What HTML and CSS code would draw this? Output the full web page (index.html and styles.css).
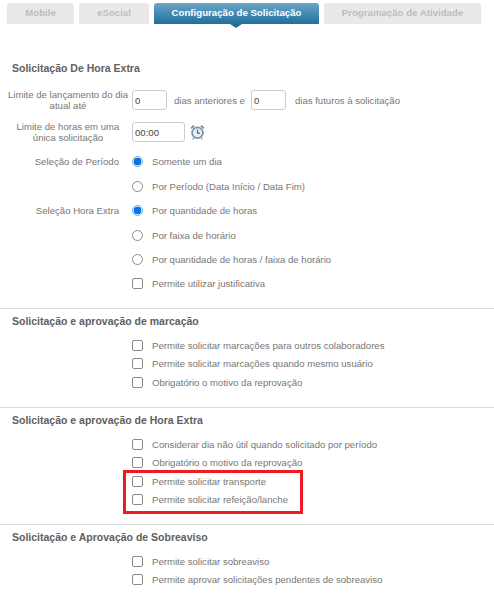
FILE: index.html
```html
<!DOCTYPE html>
<html lang="pt-BR">
<head>
    <meta charset="UTF-8">
    <meta name="viewport" content="width=device-width, initial-scale=1.0">
    <title>Configuração de Solicitação</title>
    <link rel="stylesheet" href="styles.css">
</head>
<body>
    <!-- Abas -->
    <nav class="tabs">
        <div class="tab tab-mobile">Mobile</div>
        <div class="tab tab-esocial">eSocial</div>
        <div class="tab tab-config active">Configuração de Solicitação</div>
        <div class="tab tab-prog">Programação de Atividade</div>
    </nav>

    <!-- Hora extra -->
    <section class="section first">
        <h2>Solicitação De Hora Extra</h2>

        <div class="form-row row-limit">
            <div class="row-label">Limite de lançamento do dia atual até</div>
            <div class="row-inline">
                <input class="text-input small" type="text" value="0">
                <span class="after-first">dias anteriores e</span>
                <input class="text-input small" type="text" value="0">
                <span class="after-second">dias futuros à solicitação</span>
            </div>
        </div>

        <div class="form-row row-hours">
            <div class="row-label">Limite de horas em uma única solicitação</div>
            <div class="row-inline">
                <input class="text-input hour" type="text" value="00:00">
                <svg class="clock" width="15" height="16" viewBox="0 0 15 16">
                    <circle cx="7.5" cy="8.8" r="5.4" fill="#e9eff3" stroke="#7b93a3" stroke-width="1.7"/>
                    <path d="M7.5 5.6V9.2H10" fill="none" stroke="#4f6676" stroke-width="1.2"/>
                    <path d="M.6 3.8 3.2 1 4.6 2.2 1.8 5ZM14.4 3.8 11.8 1 10.4 2.2 13.2 5Z" fill="#6f8797"/>
                    <path d="M3.6 14.2 2.6 15.4M11.4 14.2 12.4 15.4" stroke="#7b93a3" stroke-width="1.4"/>
                </svg>
            </div>
        </div>

        <div class="form-row row-first-radio">
            <div class="row-label side">Seleção de Período</div>
            <label class="option"><span class="radio on"></span>Somente um dia</label>
        </div>
        <div class="form-row row-period">
            <div class="row-label"></div>
            <label class="option"><span class="radio"></span>Por Período (Data Início / Data Fim)</label>
        </div>

        <div class="form-row row-extra">
            <div class="row-label side">Seleção Hora Extra</div>
            <label class="option"><span class="radio on"></span>Por quantidade de horas</label>
        </div>
        <div class="form-row row-next">
            <div class="row-label"></div>
            <label class="option"><span class="radio"></span>Por faixa de horário</label>
        </div>
        <div class="form-row row-last">
            <div class="row-label"></div>
            <label class="option"><span class="radio"></span>Por quantidade de horas / faixa de horário</label>
        </div>
        <div class="form-row row-last">
            <div class="row-label"></div>
            <label class="option"><span class="check"></span>Permite utilizar justificativa</label>
        </div>
    </section>

    <section class="section short">
        <h2>Solicitação e aprovação de marcação</h2>
        <div class="check-list">
            <label class="option"><span class="check"></span>Permite solicitar marcações para outros colaboradores</label>
            <label class="option"><span class="check"></span>Permite solicitar marcações quando mesmo usuário</label>
            <label class="option"><span class="check"></span>Obrigatório o motivo da reprovação</label>
        </div>
    </section>

    <section class="section">
        <h2>Solicitação e aprovação de Hora Extra</h2>
        <div class="check-list">
            <label class="option"><span class="check"></span>Considerar dia não útil quando solicitado por período</label>
            <label class="option"><span class="check"></span>Obrigatório o motivo da reprovação</label>
            <label class="option"><span class="check"></span>Permite solicitar transporte</label>
            <label class="option"><span class="check"></span>Permite solicitar refeição/lanche</label>
        </div>
        <!-- destaque em vermelho -->
        <div class="highlight"></div>
    </section>

    <section class="section last">
        <h2>Solicitação e Aprovação de Sobreaviso</h2>
        <div class="check-list">
            <label class="option"><span class="check"></span>Permite solicitar sobreaviso</label>
            <label class="option"><span class="check"></span>Permite aprovar solicitações pendentes de sobreaviso</label>
        </div>
    </section>
</body>
</html>
```

FILE: styles.css
```css
* {
    box-sizing: border-box;
    margin: 0;
    padding: 0;
}

html, body {
    height: 594px;
    overflow: hidden;
}

body {
    font-family: "Liberation Sans", Arial, sans-serif;
    font-size: 9.6px;
    color: #777;
    background-color: #fff;
    position: relative;
}

.tabs {
    display: flex;
    gap: 5px;
    padding: 3px 0 0 7px;
}

.tab {
    height: 21px;
    line-height: 20px;
    text-align: center;
    font-size: 9.67px;
    font-weight: bold;
    color: #bdbdbd;
    background-color: #e9e9e9;
    border-radius: 3px 3px 0 0;
    position: relative;
}

.tab-mobile { width: 67px; }
.tab-esocial { width: 70px; }
.tab-config { width: 165px; }
.tab-prog { width: 157px; }

.tab.active {
    color: #fff;
    background: linear-gradient(#6ba6c6, #1f6f9d);
}

.tab.active::after {
    content: "";
    position: absolute;
    left: 76px;
    top: 21px;
    border-left: 6px solid transparent;
    border-right: 6px solid transparent;
    border-top: 4px solid #1f6f9d;
}

.section {
    position: relative;
    border-top: 1px solid #dcdcdc;
    height: 117px;
}

.section.first {
    border-top: 0;
    height: 284px;
    padding-top: 37px;
}

.section.short {
    height: 99px;
}

.section.last {
    height: 70px;
}

h2 {
    font-size: 10.5px;
    font-weight: bold;
    color: #606060;
    line-height: 14px;
    padding-left: 12px;
}

.section h2 {
    margin-top: 5px;
}

.section.first h2 {
    margin-top: 0;
}

.form-row {
    display: flex;
    align-items: center;
}

.row-label {
    width: 126px;
    flex: none;
    text-align: center;
    line-height: 11px;
    margin-left: 5px;
    margin-right: 1px;
}

.row-label.side {
    text-align: right;
    padding-right: 12px;
}

.row-inline {
    display: flex;
    align-items: center;
}

.row-limit { margin-top: 15px; height: 20px; }
.row-hours { margin-top: 12px; height: 20px; }
.row-first-radio { margin-top: 9px; height: 20px; }
.row-period { margin-top: 5px; height: 20px; }
.row-extra { margin-top: 4px; height: 20px; }
.row-next { margin-top: 5px; height: 20px; }
.row-last { margin-top: 4px; height: 20px; }

.text-input {
    height: 20px;
    font-family: "Liberation Sans", Arial, sans-serif;
    font-size: 9.6px;
    color: #444;
    border: 1px solid #ccc;
    border-radius: 3px;
    padding: 0 2px;
    background-color: #fff;
}

.small { width: 35px; }
.hour { width: 53px; }

.after-first { margin: 0 6px 0 7px; }
.after-second { margin-left: 9px; }

.clock {
    margin-left: 5px;
}

.option {
    display: flex;
    align-items: center;
    height: 18px;
    color: #777;
}

.radio {
    width: 11px;
    height: 11px;
    border: 1px solid #8a8a8a;
    border-radius: 50%;
    margin-right: 9px;
    background-color: #fff;
    flex: none;
}

.radio.on {
    border: 1px solid #6aa9ee;
    background: radial-gradient(circle, #0a74e4 3.6px, #fff 4.2px);
}

.check {
    width: 11px;
    height: 11px;
    border: 1px solid #8a8a8a;
    border-radius: 2px;
    margin-right: 9px;
    background-color: #fff;
    flex: none;
}

.check-list {
    display: flex;
    flex-direction: column;
    padding: 8px 0 0 132px;
}

.check-list .option:nth-child(3) {
    margin-top: 1px;
}

.highlight {
    position: absolute;
    left: 123px;
    top: 62px;
    width: 180px;
    height: 44px;
    border: 3px solid #ed1c24;
}
```
